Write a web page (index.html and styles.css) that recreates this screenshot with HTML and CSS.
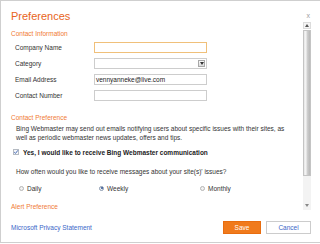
FILE: index.html
```html
<!DOCTYPE html>
<html>
<head>
<meta charset="utf-8">
<link rel="stylesheet" href="styles.css">
</head>
<body>
<div class="dialog">
  <div class="head">
    <h1 class="title">Preferences</h1>
    <span class="close">x</span>
  </div>
  <div class="body">
    <div class="scroll">
      <div class="section">Contact Information</div>
      <div class="rows">
        <div class="row"><span class="label">Company Name</span><span class="input focus"></span></div>
        <div class="row"><span class="label">Category</span><span class="input select"><span class="arrow"><svg width="4" height="3" viewBox="0 0 4 3"><path d="M0 0H4L2 3Z" fill="#333"/></svg></span></span></div>
        <div class="row"><span class="label">Email Address</span><span class="input">vennyanneke@live.com</span></div>
        <div class="row"><span class="label">Contact Number</span><span class="input"></span></div>
      </div>
      <div class="section sec2">Contact Preference</div>
      <p class="para">Bing Webmaster may send out emails notifying users about specific issues with their sites, as<br>well as periodic webmaster news updates, offers and tips.</p>
      <div class="check">
        <span class="box"><svg width="6" height="6" viewBox="0 0 6 6"><path d="M1.2 3.1L2.5 4.4L4.9 1.3" fill="none" stroke="#4a6fb8" stroke-width="1"/></svg></span>
        <span class="checktext">Yes, I would like to receive Bing Webmaster communication</span>
      </div>
      <p class="question">How often would you like to receive messages about your site(s)' issues?</p>
      <div class="radios">
        <span class="opt daily"><span class="radio"></span>Daily</span>
        <span class="opt weekly"><span class="radio on"></span>Weekly</span>
        <span class="opt monthly"><span class="radio"></span>Monthly</span>
      </div>
      <div class="section sec3">Alert Preference</div>
    </div>
    <div class="sbar">
      <div class="sbtn"><svg width="4" height="3" viewBox="0 0 4 3"><path d="M0 3H4L2 0Z" fill="#555"/></svg></div>
      <div class="thumb"></div>
      <div class="track"><svg width="4" height="3" viewBox="0 0 4 3"><path d="M0 0H4L2 3Z" fill="#888"/></svg></div>
    </div>
  </div>
  <div class="foot">
    <a class="link">Microsoft Privacy Statement</a>
    <div class="buttons">
      <span class="btn save">Save</span>
      <span class="btn cancel">Cancel</span>
    </div>
  </div>
</div>
</body>
</html>
```

FILE: styles.css
```css
html, body {
  margin: 0;
  padding: 0;
  background: #fff;
}
body {
  font-family: "Liberation Sans", Arial, sans-serif;
  font-size: 6.5px;
  color: #333;
}
.dialog {
  box-sizing: border-box;
  width: 320px;
  height: 243px;
  border-top: 1px solid #cfcfcf;
  border-left: 1px solid #cfcfcf;
  border-bottom: 1px solid #cfcfcf;
  display: flex;
  flex-direction: column;
}
.head {
  height: 21px;
  display: flex;
  justify-content: space-between;
  align-items: flex-start;
  padding-left: 10px;
  padding-right: 10px;
}
.title {
  margin: 9px 0 0 0;
  font-size: 11px;
  line-height: 12px;
  font-weight: normal;
  color: #e8641b;
}
.close {
  margin-top: 11px;
  font-size: 7px;
  line-height: 8px;
  color: #a0a0a0;
}
.body {
  height: 190px;
  display: flex;
  overflow: hidden;
}
.scroll {
  flex: 1;
  padding-left: 10px;
  overflow: hidden;
}
.section {
  color: #f07a35;
  line-height: 8px;
  margin-top: 8px;
}
.rows {
  display: flex;
  flex-direction: column;
  gap: 5px;
  margin-top: 4px;
  padding-left: 4px;
}
.row {
  display: flex;
  align-items: center;
  height: 11px;
}
.label {
  width: 79px;
  color: #333;
}
.input {
  box-sizing: border-box;
  width: 113px;
  height: 11px;
  border: 1px solid #cdcdcd;
  display: flex;
  align-items: center;
  padding-left: 1px;
  color: #222;
}
.input.focus {
  border-color: #f0c07a;
}
.input.select {
  justify-content: flex-end;
  padding-right: 1px;
}
.arrow {
  box-sizing: border-box;
  width: 7px;
  height: 7px;
  border: 1px solid #a8a8a8;
  background: linear-gradient(#fafafa, #dcdcdc);
  display: flex;
  align-items: center;
  justify-content: center;
}
.sec2 {
  margin-top: 13px;
}
.para {
  margin: 3px 0 0 5px;
  line-height: 8.5px;
  white-space: nowrap;
  color: #333;
}
.check {
  display: flex;
  align-items: center;
  margin-top: 6px;
  margin-left: 2px;
  height: 8px;
}
.box {
  box-sizing: border-box;
  width: 6px;
  height: 6px;
  border: 1px solid #b4bac2;
  background: #f6f7f9;
  display: flex;
  align-items: center;
  justify-content: center;
  margin-right: 4px;
}
.box svg {
  flex: none;
}
.checktext {
  font-weight: bold;
  color: #222;
}
.question {
  margin: 12px 0 0 5px;
  line-height: 8px;
}
.radios {
  display: flex;
  margin-top: 8px;
  margin-left: 8px;
  height: 8px;
  align-items: center;
}
.opt {
  display: flex;
  align-items: center;
}
.daily {
  width: 80px;
}
.weekly {
  width: 101px;
}
.radio {
  box-sizing: border-box;
  width: 5px;
  height: 5px;
  border-radius: 50%;
  border: 1px solid #b5b5b5;
  background: #f2f2f2;
  margin-right: 3px;
  display: flex;
  align-items: center;
  justify-content: center;
}
.radio.on {
  border-color: #8a9ab0;
}
.radio.on::after {
  content: "";
  width: 2px;
  height: 2px;
  border-radius: 50%;
  background: #2a4f8f;
}
.sec3 {
  margin-top: 11px;
}
.sbar {
  width: 8px;
  margin-right: 9px;
  display: flex;
  flex-direction: column;
  height: 188px;
}
.sbtn {
  box-sizing: border-box;
  height: 7px;
  border: 1px solid #dcdcdc;
  background: #f4f4f4;
  display: flex;
  align-items: center;
  justify-content: center;
}
.thumb {
  box-sizing: border-box;
  height: 146px;
  margin-top: 1px;
  border: 1px solid #c4c4c4;
  background: linear-gradient(to right, #e6e6e6, #f6f6f6 30%, #cfcfcf 55%, #b8b8b8);
}
.track {
  flex: 1;
  background: #f3f3f3;
  display: flex;
  align-items: flex-end;
  justify-content: center;
  padding-bottom: 3px;
}
.foot {
  flex: 1;
  display: flex;
  align-items: center;
  justify-content: space-between;
  padding-left: 10px;
  padding-right: 9px;
}
.link {
  color: #3a66c8;
}
.buttons {
  display: flex;
  gap: 5px;
}
.btn {
  box-sizing: border-box;
  height: 13px;
  display: flex;
  align-items: center;
  justify-content: center;
}
.save {
  width: 38px;
  background: #f07a1c;
  color: #fff;
  border: 1px solid #e86d10;
}
.cancel {
  width: 45px;
  background: #fff;
  color: #3a66c8;
  border: 1px solid #cccccc;
}
```
